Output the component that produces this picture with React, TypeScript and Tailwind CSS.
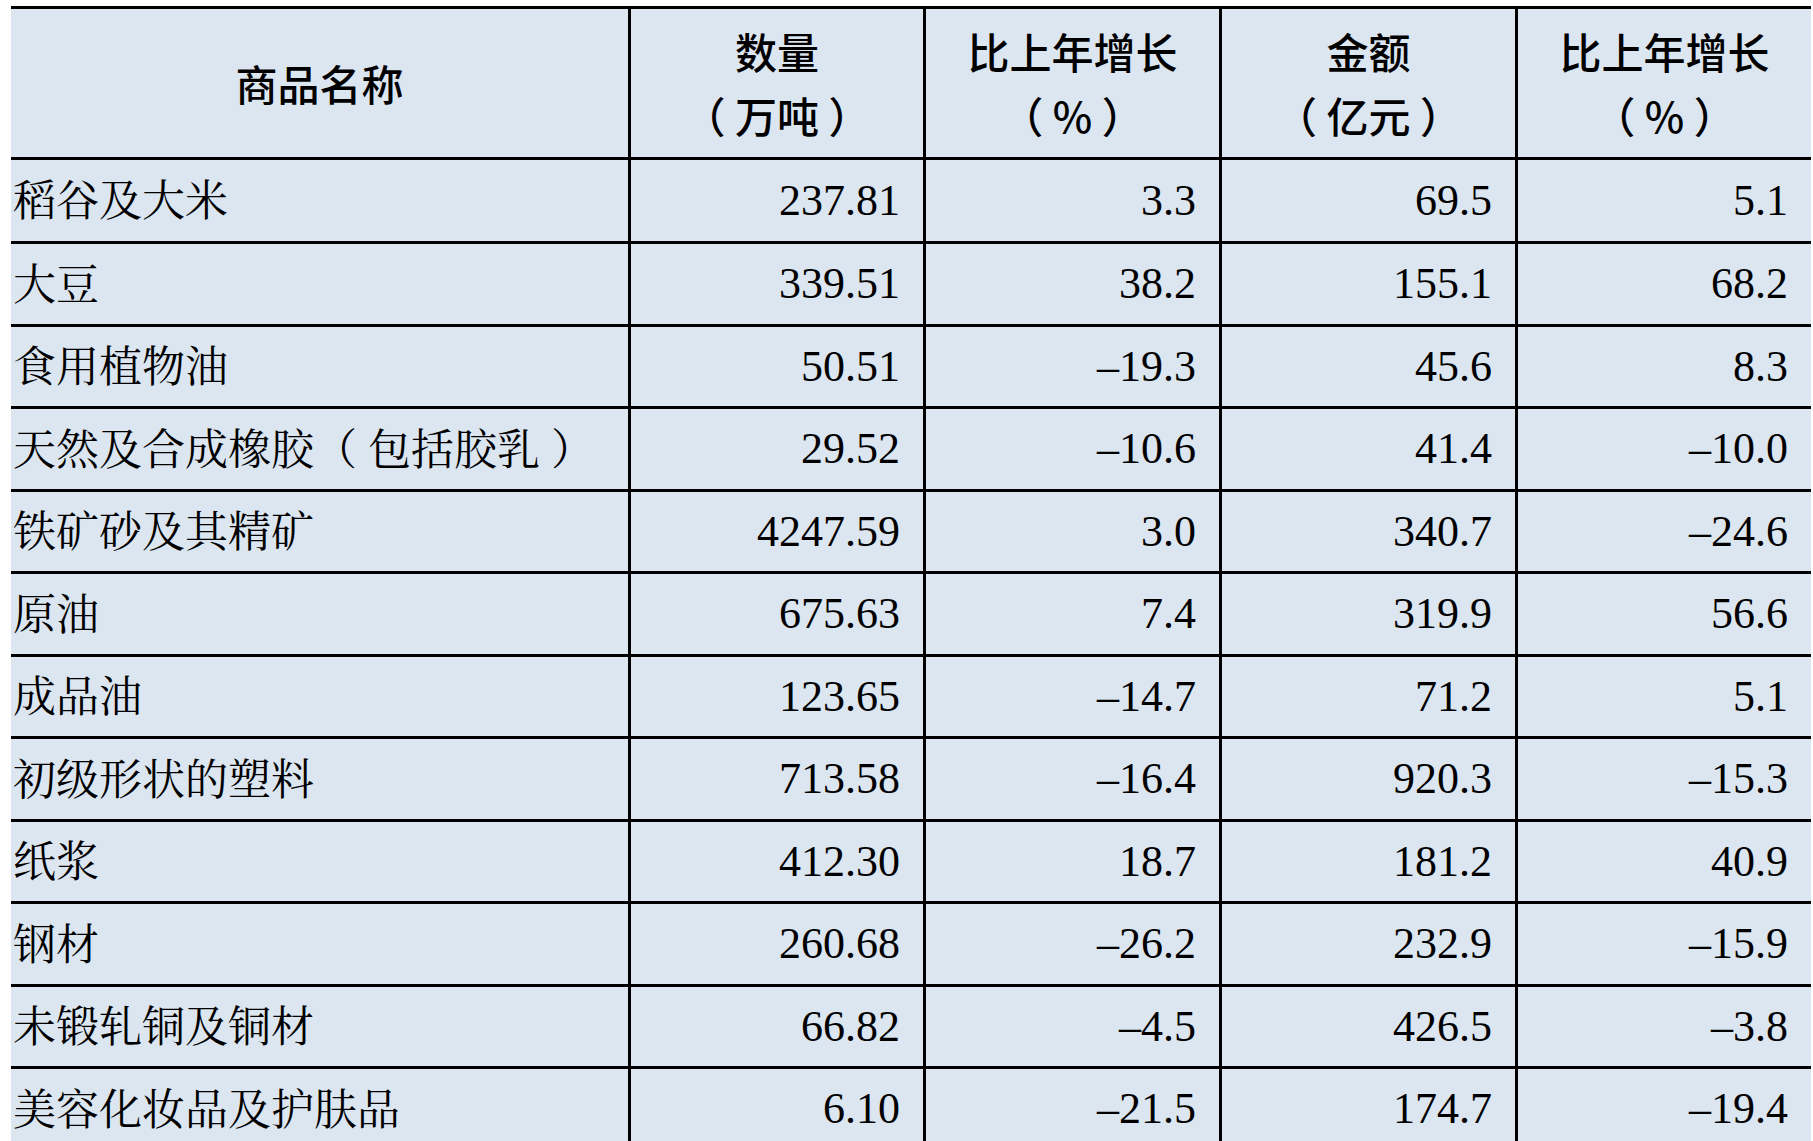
const rows: [string, string, string, string, string][] = [
  ['稻谷及大米', '237.81', '3.3', '69.5', '5.1'],
  ['大豆', '339.51', '38.2', '155.1', '68.2'],
  ['食用植物油', '50.51', '–19.3', '45.6', '8.3'],
  ['天然及合成橡胶（ 包括胶乳 ）', '29.52', '–10.6', '41.4', '–10.0'],
  ['铁矿砂及其精矿', '4247.59', '3.0', '340.7', '–24.6'],
  ['原油', '675.63', '7.4', '319.9', '56.6'],
  ['成品油', '123.65', '–14.7', '71.2', '5.1'],
  ['初级形状的塑料', '713.58', '–16.4', '920.3', '–15.3'],
  ['纸浆', '412.30', '18.7', '181.2', '40.9'],
  ['钢材', '260.68', '–26.2', '232.9', '–15.9'],
  ['未锻轧铜及铜材', '66.82', '–4.5', '426.5', '–3.8'],
  ['美容化妆品及护肤品', '6.10', '–21.5', '174.7', '–19.4'],
]

// row heights follow the uneven rule spacing of the source table
const heights = ['h-[84px]', 'h-[83px]', 'h-[82px]', 'h-[83px]', 'h-[82px]', 'h-[83px]', 'h-[82px]', 'h-[83px]', 'h-[82px]', 'h-[83px]', 'h-[82px]', 'h-[83px]']

const cols = ['w-[617px]', 'w-[295px]', 'w-[296px]', 'w-[296px]', 'w-[296px]']

const headers: [string, string?][] = [
  ['商品名称'],
  ['数量', '（ 万吨 ）'],
  ['比上年增长', '（ % ）'],
  ['金额', '（ 亿元 ）'],
  ['比上年增长', '（ % ）'],
]

const serif = "font-['Noto_Serif_CJK_SC','Liberation_Serif','Noto_Sans_CJK_SC',serif]"
const numFont = "font-['Liberation_Serif','Noto_Sans_CJK_SC',serif]"

export default function App() {
  return (
    <div className="min-h-screen bg-white pt-[6px] pl-[11px] overflow-hidden">
      <div className="w-[1800px] bg-[#dce6f1] text-black">
        {/* header */}
        <div className="flex h-[151px] border-t-[3px] border-black">
          {headers.map(([a, b], i) => (
            <div
              key={i}
              className={`${cols[i]} ${i > 0 ? 'border-l-[3px] border-black' : ''} flex flex-col items-center justify-center font-['Noto_Sans_CJK_SC',sans-serif] font-medium text-[42px] leading-[64px]`}
            >
              <span>{a}</span>
              {b && <span className="whitespace-pre">{b}</span>}
            </div>
          ))}
        </div>

        {/* body */}
        {rows.map((r, ri) => (
          <div key={ri} className={`flex ${heights[ri]} border-t-[3px] border-black`}>
            <div className={`${cols[0]} flex items-center pl-[2px] pb-[4px] text-[43px] ${serif} whitespace-pre`}>
              {r[0]}
            </div>
            {r.slice(1).map((v, ci) => (
              <div
                key={ci}
                className={`${cols[ci + 1]} border-l-[3px] border-black flex items-center justify-end pr-[23px] text-[44px] ${numFont}`}
              >
                {v}
              </div>
            ))}
          </div>
        ))}
      </div>
    </div>
  )
}
